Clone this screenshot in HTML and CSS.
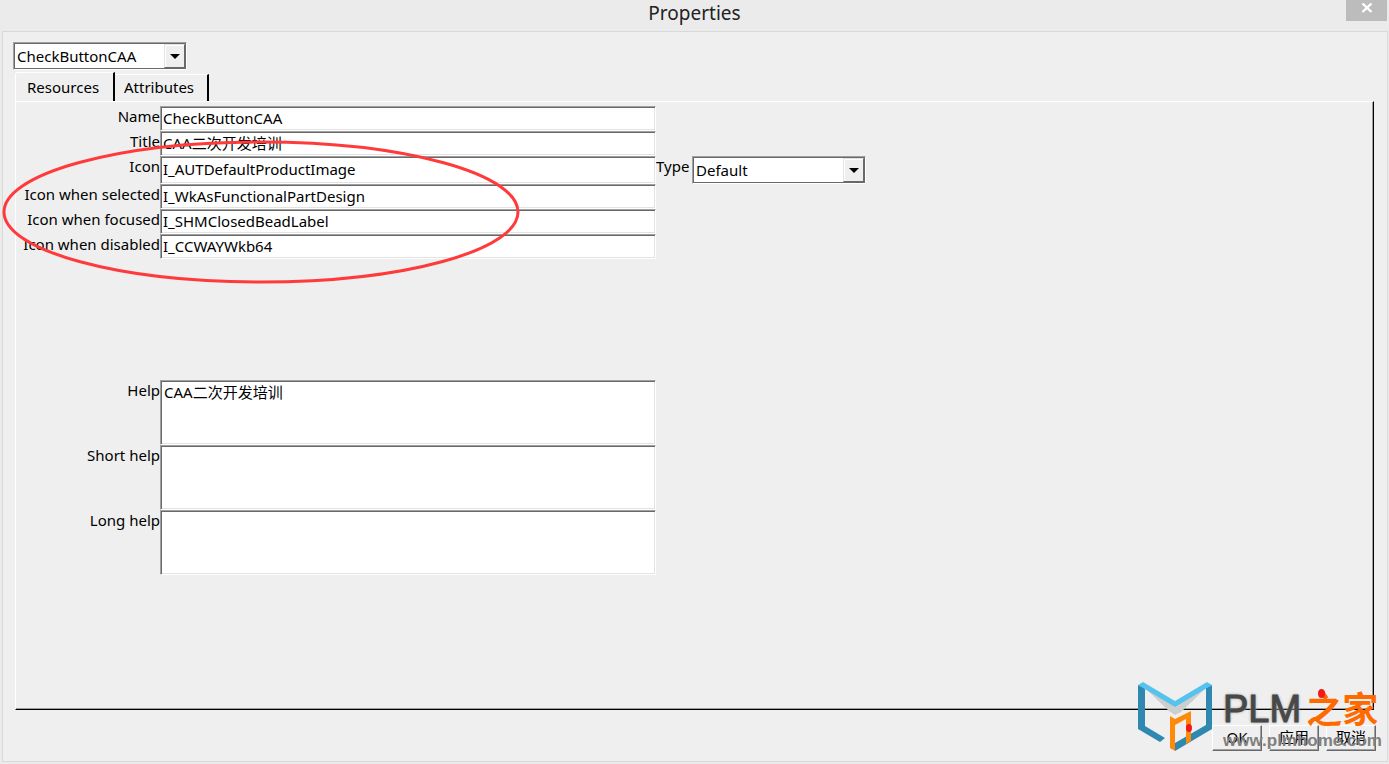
FILE: index.html
```
<!DOCTYPE html>
<html lang="zh-CN">
<head>
    <meta charset="UTF-8">
    <meta name="viewport" content="width=device-width, initial-scale=1.0">
    <title>Properties</title>
    <link rel="stylesheet" href="styles.css">
</head>
<body>
    <header class="titlebar">
        <h1 class="title">Properties</h1>
        <button class="close" type="button" aria-label="Close">
            <svg width="12" height="10" viewBox="0 0 12 10"><path d="M1.500 .5L10.500 9M10.500 .5L1.500 9" stroke="#fff" stroke-width="2.400" fill="none"/></svg>
        </button>
    </header>

    <form class="dialog">
        <div class="combo">
            <select class="field" aria-label="Object">
                <option>CheckButtonCAA</option>
            </select>
            <span class="arrow"></span>
        </div>

        <div class="tabs" role="tablist">
            <button class="tab active" type="button" role="tab" aria-selected="true">Resources</button>
            <button class="tab" type="button" role="tab" aria-selected="false">Attributes</button>
        </div>

        <div class="panel" role="tabpanel">
            <div class="fields">
                <label for="name">Name</label>
                <input class="field" type="text" id="name" value="CheckButtonCAA">

                <label for="title">Title</label>
                <input class="field" type="text" id="title" value="CAA二次开发培训">

                <label for="icon">Icon</label>
                <input class="field" type="text" id="icon" value="I_AUTDefaultProductImage">
                <label class="type-label" for="type">Type</label>
                <div class="combo">
                    <select class="field" id="type">
                        <option>Default</option>
                    </select>
                    <span class="arrow"></span>
                </div>

                <label for="selected">Icon when selected</label>
                <input class="field" type="text" id="selected" value="I_WkAsFunctionalPartDesign">

                <label for="focused">Icon when focused</label>
                <input class="field" type="text" id="focused" value="I_SHMClosedBeadLabel">

                <label for="disabled">Icon when disabled</label>
                <input class="field" type="text" id="disabled" value="I_CCWAYWkb64">
            </div>

            <div class="fields help">
                <label for="help">Help</label>
                <textarea class="field" id="help">CAA二次开发培训</textarea>

                <label for="shortHelp">Short help</label>
                <textarea class="field" id="shortHelp"></textarea>

                <label for="longHelp">Long help</label>
                <textarea class="field" id="longHelp"></textarea>
            </div>
        </div>

        <div class="actions">
            <button class="push" type="button">OK</button>
            <button class="push" type="button">应用</button>
            <button class="push" type="button">取消</button>
        </div>
    </form>

    <!-- red circle round the icon fields -->
    <svg class="marker" width="520" height="146" viewBox="0 0 520 146">
        <ellipse cx="260" cy="73" rx="257" ry="70" fill="none" stroke="#ff3a3a" stroke-width="3"/>
    </svg>

    <div class="watermark">
        <svg width="76" height="70" viewBox="0 0 76 70">
            <path d="M8 6L38 22L69 6L44 30L38 33L32 29Z" fill="#cdcfcf"/>
            <path d="M1 3L8 6V44L28 56L23 60L1 47Z" fill="#2e88b0"/>
            <path d="M69 6L75 3V47L38 69V61L69 43Z" fill="#2e88b0"/>
            <path d="M1 3L6 0L38 19L70 0L75 3L38 25Z" fill="#55c3ee"/>
            <path d="M33 34L38 37L54 29V59L49 62V37L38 43V69L33 66Z" fill="#ff8a0a"/>
            <ellipse cx="52" cy="46" rx="3" ry="4" fill="#f01818"/>
        </svg>
        <div class="brand">
            <div class="brand-name">PLM<span class="brand-cn">之家</span></div>
            <div class="brand-url">www.plmhome.com</div>
        </div>
    </div>
</body>
</html>
```
FILE: styles.css
```
* { box-sizing: border-box; }
body {
    margin: 0;
    min-height: 100vh;
    display: flex;
    flex-direction: column;
    position: relative;
    background: #ebebeb;
    color: #000;
    font: 15px/20px "Noto Sans", "Noto Sans CJK SC", sans-serif;
}
button, input, select, textarea { font: inherit; color: inherit; }

.titlebar { display: grid; grid-template-columns: 1fr auto 1fr; height: 31px; }
.title { grid-column: 2; margin: 0; font-size: 19px; font-weight: 400; line-height: 27px; color: #222; }
.close { justify-self: end; width: 41px; height: 21px; margin-right: 2px; padding: 0 0 6px; border: 0; background: #bcbcbc; line-height: 0; }

.dialog {
    flex: 1;
    display: flex;
    flex-direction: column;
    margin: 0 1px 2px 2px;
    padding: 10px 11px 10px 10px;
    border: 1px solid #d9d9d9;
    background: #efefef;
}

/* sunken fields */
.field {
    width: 100%;
    height: 25px;
    margin: 0;
    padding: 0 2px 2px;
    border: 1px solid;
    border-color: #a0a0a0 #fff #fff #a0a0a0;
    border-radius: 0;
    outline: 0;
    background: #fff;
    box-shadow: inset 1px 1px #696969, inset -1px -1px #e3e3e3;
}
textarea.field { display: block; height: 65px; padding: 1px 3px; resize: none; }

.combo { display: grid; align-items: center; width: 174px; }
.combo .field, .combo .arrow { grid-area: 1 / 1; }
.combo .field { height: 28px; padding: 0 3px; appearance: none; box-shadow: inset 1px 1px #696969, inset -1px -1px #696969; }
.arrow {
    justify-self: end;
    display: grid;
    place-items: center;
    width: 21px;
    height: 24px;
    margin-right: 2px;
    background: #efefef;
    border: 1px solid;
    border-color: #e3e3e3 #696969 #696969 #e3e3e3;
    box-shadow: inset 1px 1px #fff;
    pointer-events: none;
}
.arrow::after { content: ""; border: 5px solid transparent; border-top-color: #000; border-bottom: 0; }

.tabs { display: flex; align-items: flex-end; margin: 2px 2px 0; }
.tab {
    min-width: 94px;
    height: 27px;
    padding: 0 9px 2px;
    border: 0;
    border-top: 1px solid #fff;
    border-right: 2px solid #000;
    background: #efefef;
    text-align: left;
}
.tab.active { min-width: 100px; height: 29px; padding: 0 11px; border-left: 1px solid #fff; border-top-left-radius: 3px; }

.panel {
    flex: 1;
    margin: 0 2px;
    padding: 4px 0;
    border: 1px solid #fff;
    border-right-color: #000;
    border-bottom-color: #000;
    box-shadow: inset -1px -1px #a0a0a0;
}
.fields { display: grid; grid-template-columns: 144px 496px 36px 1fr; justify-items: start; }
.fields label { grid-column: 1; justify-self: end; white-space: nowrap; }
.fields .type-label { grid-column: 3; justify-self: start; }
#icon { height: 28px; }
.help { margin-top: 121px; }

.actions { display: flex; justify-content: flex-end; gap: 7px; margin-top: 15px; }
.push {
    width: 50px;
    height: 26px;
    padding: 0 0 2px;
    border: 1px solid;
    border-color: #fff #696969 #696969 #fff;
    background: #efefef;
    box-shadow: inset -1px -1px #a0a0a0;
}

.marker { position: absolute; left: 1px; top: 139px; pointer-events: none; }

.watermark { position: absolute; right: 7px; bottom: 10px; display: flex; gap: 10px; pointer-events: none; }
.brand-name {
    display: flex;
    gap: 5px;
    height: 46px;
    font: 38px/54px "Liberation Sans", sans-serif;
    color: #484848;
    -webkit-text-stroke: 1px #484848;
    text-shadow: 0 0 3px #aaa, 0 0 3px #aaa;
}
.brand-cn {
    position: relative;
    font: bold 36px/50px "Noto Sans CJK SC", sans-serif;
    color: #ff6a00;
    text-shadow: none;
    -webkit-text-stroke: 0;
}
/* red dot on top of the first character */
.brand-cn::before {
    content: "";
    position: absolute;
    left: 12px;
    top: 7px;
    width: 7px;
    height: 9px;
    border-radius: 50%;
    background: #f01818;
}
.brand-url { font: bold 17px/26px "Liberation Sans", sans-serif; color: #808080; }
```
